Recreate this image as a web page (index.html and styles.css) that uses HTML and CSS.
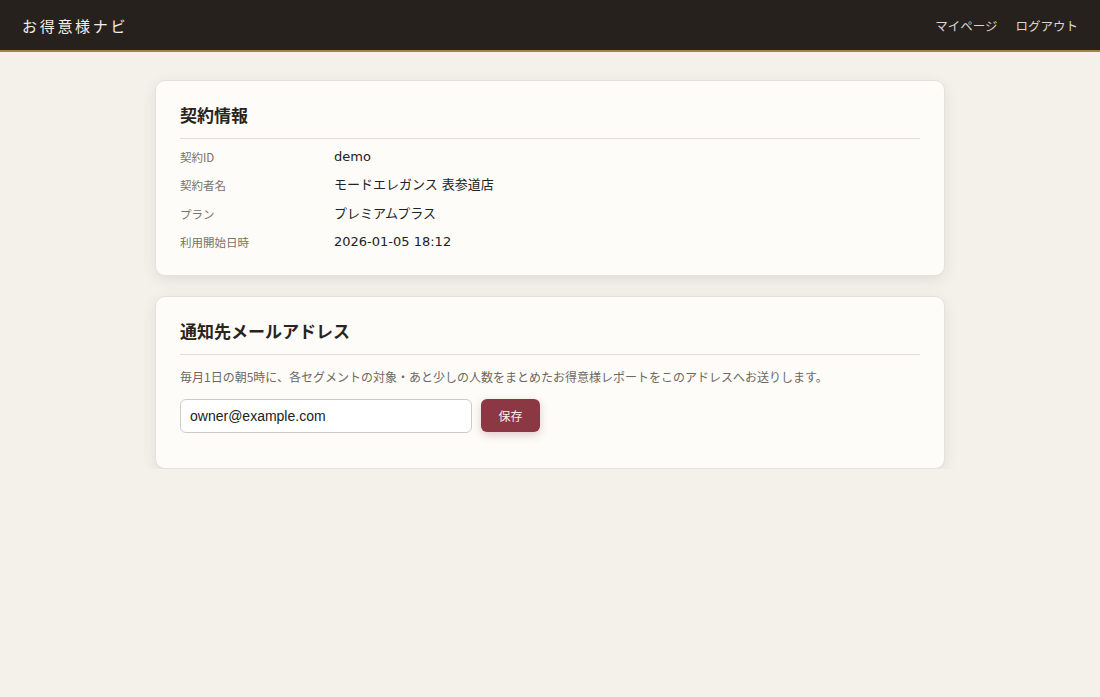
FILE: index.html
```html
<!DOCTYPE html>
<html lang="ja">
<head>
    <meta charset="UTF-8">
    <title>お得意様ナビ - マイページ</title>
    <link rel="stylesheet" href="styles.css">
</head>
<body>

<header class="topbar">
    <div class="brand">お得意様ナビ</div>
    <nav class="nav">
        <a href="#">マイページ</a>
        <a href="#">ログアウト</a>
    </nav>
</header>

<main class="content">
    <section class="card">
        <h2>契約情報</h2>
        <dl class="info">
            <dt>契約ID</dt>
            <dd>demo</dd>
            <dt>契約者名</dt>
            <dd>モードエレガンス 表参道店</dd>
            <dt>プラン</dt>
            <dd>プレミアムプラス</dd>
            <dt>利用開始日時</dt>
            <dd>2026-01-05 18:12</dd>
        </dl>
    </section>

    <section class="card">
        <h2>通知先メールアドレス</h2>
        <p class="note">毎月1日の朝5時に、各セグメントの対象・あと少しの人数をまとめたお得意様レポートをこのアドレスへお送りします。</p>
        <form class="mail-form">
            <input type="email" value="owner@example.com">
            <button type="button">保存</button>
        </form>
    </section>
</main>

</body>
</html>
```

FILE: styles.css
```css
* {
    box-sizing: border-box;
}

body {
    margin: 0;
    font-family: "Liberation Sans", "Noto Sans CJK JP", sans-serif;
    background: #f4f1eb;
    color: #222;
}

.topbar {
    height: 52px;
    background: #27211d;
    border-bottom: 2px solid #a4824a;
    display: flex;
    align-items: center;
    justify-content: space-between;
    padding: 0 22px;
}

.brand {
    color: #f3eee6;
    font-family: "Noto Sans CJK JP", serif;
    font-size: 15px;
    letter-spacing: 2.7px;
}

.nav {
    display: flex;
    gap: 18px;
}

.nav a {
    color: #ddd6cc;
    text-decoration: none;
    font-size: 12.5px;
    font-family: "Noto Sans CJK JP", sans-serif;
}

.content {
    width: 790px;
    margin: 28px auto 0;
    display: flex;
    flex-direction: column;
    gap: 20px;
}

.card {
    background: #fdfcf8;
    border: 1px solid #e6e1d8;
    border-radius: 10px;
    box-shadow: 0 4px 14px rgba(60, 45, 30, 0.1);
    padding: 21px 24px 23px;
}

.card h2 {
    margin: 0;
    padding-bottom: 11px;
    border-bottom: 1px solid #e2ddd4;
    font-family: "Noto Sans CJK JP", serif;
    font-size: 17px;
    font-weight: bold;
    color: #2a2420;
}

.info {
    display: grid;
    grid-template-columns: 154px 1fr;
    row-gap: 8.3px;
    margin: 8px 0 0;
    align-items: center;
}

.info dt {
    font-size: 11.5px;
    color: #7a7269;
    font-family: "Noto Sans CJK JP", sans-serif;
    line-height: 20px;
}

.info dd {
    margin: 0;
    font-size: 13px;
    color: #222;
    font-family: "DejaVu Sans", "Noto Sans CJK JP", sans-serif;
    line-height: 20px;
}

.note {
    margin: 13px 0 14px;
    font-size: 12px;
    color: #6f675f;
    font-family: "Noto Sans CJK JP", sans-serif;
}

.mail-form {
    display: flex;
    gap: 9px;
    align-items: center;
    margin-bottom: 12px;
}

.mail-form input {
    width: 292px;
    height: 34px;
    padding: 0 9px;
    border: 1px solid #cfcac2;
    border-radius: 6px;
    font-size: 14px;
    font-family: "Liberation Sans", sans-serif;
    color: #222;
    background: #fff;
}

.mail-form button {
    width: 59px;
    height: 33px;
    border: none;
    border-radius: 6px;
    background: #8c3744;
    color: #fbeef0;
    font-size: 12px;
    font-family: "Noto Sans CJK JP", sans-serif;
    box-shadow: 0 3px 8px rgba(140, 55, 68, 0.25);
    cursor: pointer;
}
```
